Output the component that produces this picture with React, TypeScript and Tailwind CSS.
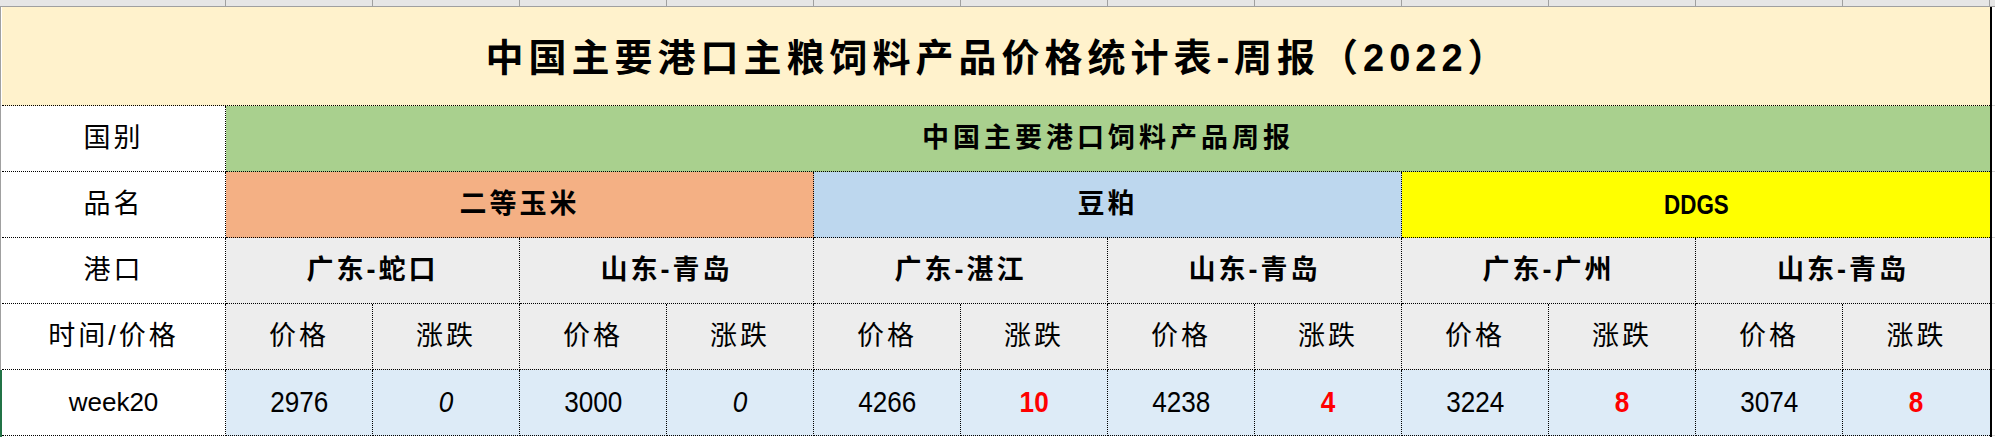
import React from "react";

const CJK = { fontFamily: "'Liberation Sans','Noto Sans CJK SC',sans-serif" };
const LAT = { fontFamily: "'Liberation Sans',Arial,sans-serif" };

const cell = "flex items-center justify-center border-r border-b border-dotted border-black";

const ports = ["广东-蛇口", "山东-青岛", "广东-湛江", "山东-青岛", "广东-广州", "山东-青岛"];

type V = { v: string; kind: "num" | "zero" | "red" };
const values: V[] = [
  { v: "2976", kind: "num" },
  { v: "0", kind: "zero" },
  { v: "3000", kind: "num" },
  { v: "0", kind: "zero" },
  { v: "4266", kind: "num" },
  { v: "10", kind: "red" },
  { v: "4238", kind: "num" },
  { v: "4", kind: "red" },
  { v: "3224", kind: "num" },
  { v: "8", kind: "red" },
  { v: "3074", kind: "num" },
  { v: "8", kind: "red" },
];

export default function App() {
  return (
    <div className="w-[1995px] h-[437px] overflow-hidden bg-white text-black">
      {/* Excel column header strip */}
      <div className="flex h-[7px] bg-[#e6e6e6] border-b border-[#a0a0a0]">
        <div className="w-[226px] h-full border-r border-[#a0a0a0]" />
        {Array.from({ length: 12 }).map((_, i) => (
          <div key={i} className="w-[147px] h-full border-r border-[#a0a0a0] shrink-0" />
        ))}
      </div>

      <div className="flex">
        {/* left row indicator */}
        <div className="flex flex-col w-[2px] shrink-0">
          <div className="h-[363px] w-[1px] bg-[#a0a0a0]" />
          <div className="h-[67px] w-[2px] bg-[#217346]" />
        </div>

        {/* table */}
        <div className="grid grid-cols-[224px_repeat(12,147px)] w-[1988px] shrink-0 grid-rows-[99px_66px_66px_66px_66px_66px]">
          {/* title */}
          <div
            className="col-span-13 flex items-center justify-center bg-[#fff2cc] border-b border-dotted border-black text-[38px] font-bold tracking-[5px] pl-[4px] pt-[4px]"
            style={CJK}
          >
            中国主要港口主粮饲料产品价格统计表-周报（2022）
          </div>

          {/* row 国别 */}
          <div className={`${cell} bg-white text-[27px] tracking-[3px]`} style={CJK}>
            国别
          </div>
          <div
            className="col-span-12 flex items-center justify-center bg-[#a9d08e] border-b border-dotted border-black text-[27px] font-bold tracking-[4px]"
            style={CJK}
          >
            中国主要港口饲料产品周报
          </div>

          {/* row 品名 */}
          <div className={`${cell} bg-white text-[27px] tracking-[3px]`} style={CJK}>
            品名
          </div>
          <div className={`${cell} col-span-4 bg-[#f4b084] text-[27px] font-bold tracking-[3px]`} style={CJK}>
            二等玉米
          </div>
          <div className={`${cell} col-span-4 bg-[#bdd7ee] text-[27px] font-bold tracking-[3px]`} style={CJK}>
            豆粕
          </div>
          <div className="col-span-4 flex items-center justify-center border-b border-dotted border-black bg-[#ffff00] text-[28px] font-bold" style={LAT}>
            <span className="inline-block scale-x-[0.8]">DDGS</span>
          </div>

          {/* row 港口 */}
          <div className={`${cell} bg-white text-[27px] tracking-[3px]`} style={CJK}>
            港口
          </div>
          {ports.map((p, i) => (
            <div
              key={i}
              className={`${i === 5 ? "flex items-center justify-center border-b border-dotted border-black" : cell} col-span-2 bg-[#ededed] text-[27px] font-bold tracking-[3px]`}
              style={CJK}
            >
              {p}
            </div>
          ))}

          {/* row 时间/价格 */}
          <div className={`${cell} bg-white text-[27px] tracking-[3px]`} style={CJK}>
            时间/价格
          </div>
          {Array.from({ length: 12 }).map((_, i) => (
            <div
              key={i}
              className={`${i === 11 ? "flex items-center justify-center border-b border-dotted border-black" : cell} bg-[#ededed] text-[27px] tracking-[3px]`}
              style={CJK}
            >
              {i % 2 === 0 ? "价格" : "涨跌"}
            </div>
          ))}

          {/* row week20 */}
          <div className={`${cell} bg-white text-[26px]`} style={LAT}>
            week20
          </div>
          {values.map((v, i) => (
            <div
              key={i}
              className={`${i === 11 ? "flex items-center justify-center border-b border-dotted border-black" : cell} bg-[#ddebf7] text-[29px] ${
                v.kind === "zero" ? "italic" : ""
              } ${v.kind === "red" ? "font-bold text-[#ff0000]" : ""}`}
              style={LAT}
            >
              <span className="inline-block scale-x-[0.9]">{v.v}</span>
            </div>
          ))}
        </div>

        {/* right edge */}
        <div className="w-[2px] h-[430px] bg-black shrink-0" />
        <div className="flex flex-col w-[3px] shrink-0">
          <div className="h-[99px] border-b border-[#d4d4d4]" />
          <div className="h-[66px] border-b border-[#d4d4d4]" />
          <div className="h-[66px] border-b border-[#d4d4d4]" />
          <div className="h-[66px] border-b border-[#d4d4d4]" />
          <div className="h-[66px] border-b border-[#d4d4d4]" />
          <div className="h-[66px] border-b border-[#d4d4d4]" />
        </div>
      </div>
    </div>
  );
}
